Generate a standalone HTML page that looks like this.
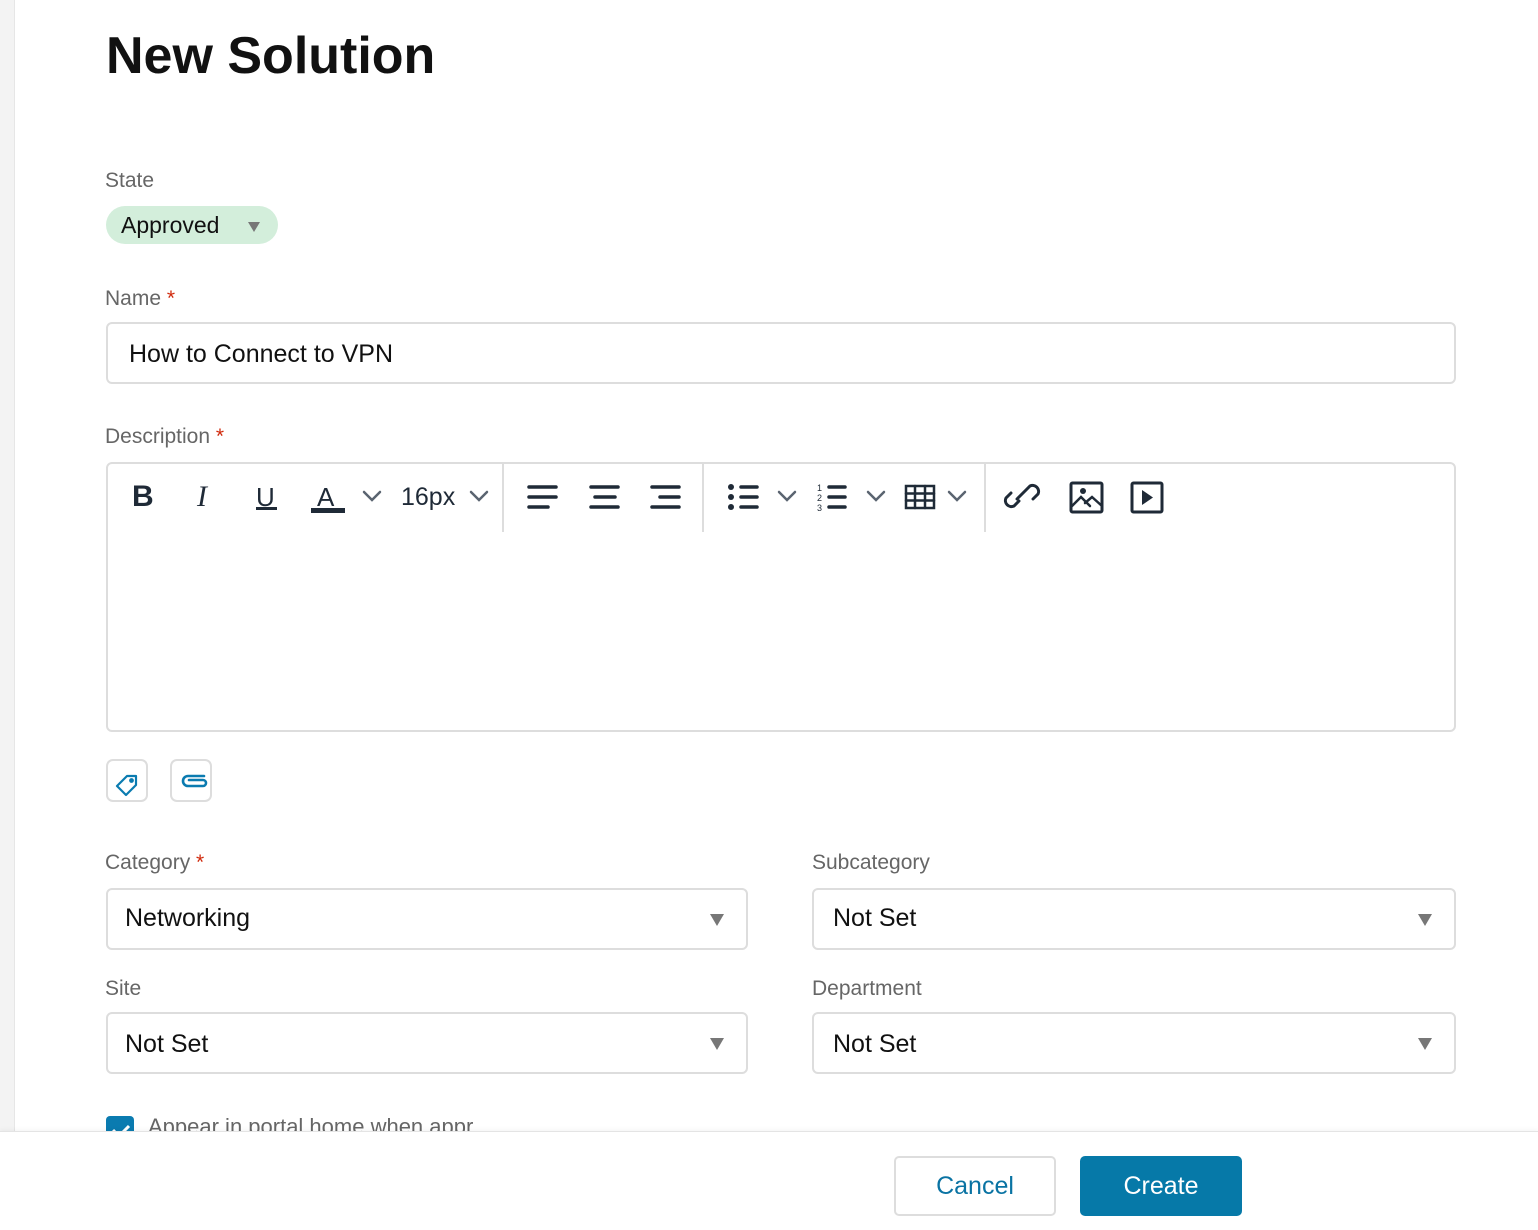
<!DOCTYPE html>
<html><head><meta charset="utf-8"><style>
*{box-sizing:border-box;margin:0;padding:0}
body{width:1538px;height:1230px;position:relative;overflow:hidden;background:#fff;font-family:"Liberation Sans",Arial,sans-serif;color:#111}
.strip{position:absolute;left:0;top:0;width:15px;height:1132px;background:#f3f3f3;border-right:1px solid #e6e6e6}
.a{position:absolute}
h1{position:absolute;left:106px;top:26px;font-size:52px;font-weight:bold;color:#111;letter-spacing:0}
.lbl{position:absolute;font-size:21px;color:#666}
.req{color:#d0290c}
.box{position:absolute;border:2px solid #ddd;border-radius:6px;background:#fff}
.val{position:absolute;font-size:25px;color:#111}
.tri{position:absolute;width:0;height:0;border-left:7px solid transparent;border-right:7px solid transparent;border-top:12px solid #777}
.sep{position:absolute;top:464px;width:2px;height:68px;background:#ddd}
svg{position:absolute}
</style></head><body>
<div class="strip"></div>
<h1>New Solution</h1>

<div class="lbl" style="left:105px;top:169px">State</div>
<div class="a" style="left:106px;top:206px;width:172px;height:38px;border-radius:19px;background:#d3eedb"></div>
<div class="val" style="left:121px;top:212px;font-size:23px">Approved</div>
<div class="tri" style="left:248px;top:222px;border-left-width:6px;border-right-width:6px;border-top-width:10px"></div>

<div class="lbl" style="left:105px;top:287px">Name<span class="req"> *</span></div>
<div class="box" style="left:106px;top:322px;width:1350px;height:62px"></div>
<div class="val" style="left:129px;top:340px">How to Connect to VPN</div>

<div class="lbl" style="left:105px;top:425px">Description<span class="req"> *</span></div>
<div class="box" style="left:106px;top:462px;width:1350px;height:270px"></div>
<div class="sep" style="left:502px"></div>
<div class="sep" style="left:702px"></div>
<div class="sep" style="left:984px"></div>

<div class="a" style="left:132px;top:480px;font-size:30px;font-weight:bold;color:#1f2a37">B</div>
<div class="a" style="left:197px;top:480px;font-size:30px;font-style:italic;font-family:'Liberation Serif',serif;color:#1f2a37">I</div>
<div class="a" style="left:256px;top:482px;font-size:26px;color:#1f2a37">U</div>
<div class="a" style="left:256px;top:507px;width:21px;height:3px;background:#1f2a37"></div>
<div class="a" style="left:317px;top:482px;font-size:26px;color:#1f2a37">A</div>
<div class="a" style="left:311px;top:508px;width:34px;height:5px;background:#1f2a37"></div>
<div class="a" style="left:401px;top:483px;font-size:25px;color:#1f2a37">16px</div>

<svg width="1538" height="80" style="left:0;top:460px" fill="none" stroke-linecap="round">
 <g stroke="#5a6470" stroke-width="2.5">
  <path d="M364 32l8 8 8-8"/><path d="M471 32l8 8 8-8"/><path d="M779 32l8 8 8-8"/><path d="M868 32l8 8 8-8"/><path d="M949 32l8 8 8-8"/>
 </g>
 <g stroke="#1f2a37" stroke-width="3.5">
  <path d="M529 27h27M529 37h27M529 47h19"/>
  <path d="M591 27h27M595 37h20M591 47h27"/>
  <path d="M652 27h27M660 37h19M652 47h27"/>
  <path d="M741 27h16M741 37h16M741 47h16"/>
  <path d="M829 27h16M829 37h16M829 47h16"/>
 </g>
 <g fill="#1f2a37"><circle cx="731" cy="27" r="3"/><circle cx="731" cy="37" r="3"/><circle cx="731" cy="47" r="3"/></g>
 <text x="817" y="31" font-size="9" fill="#1f2a37" font-family="Liberation Sans">1</text>
 <text x="817" y="41" font-size="9" fill="#1f2a37" font-family="Liberation Sans">2</text>
 <text x="817" y="51" font-size="9" fill="#1f2a37" font-family="Liberation Sans">3</text>
 <g stroke="#1f2a37" stroke-width="2.5">
  <rect x="906" y="26" width="28" height="22"/><path d="M906 33.5h28M906 40.5h28M915 26v22M925 26v22"/>
  <g stroke-width="3"><path d="M1019 41l-5 5a6 6 0 0 1-8-8l5-5M1025 31l5-5a6 6 0 0 1 8 8l-5 5M1017 39l10-10"/></g>
  <rect x="1071" y="23" width="31" height="29" rx="1.5" stroke-width="3"/>
  <path d="M1071 47l10-10 9 9M1085 43l7-6 10 9"/>
  <rect x="1132" y="23" width="30" height="29" rx="1.5" stroke-width="3"/>
 </g>
 <circle cx="1083" cy="31" r="3" fill="#1f2a37"/>
 <path d="M1142 30v15l11-7.5z" fill="#1f2a37"/>
</svg>

<div class="box" style="left:106px;top:759px;width:42px;height:43px;border-radius:7px"></div>
<div class="box" style="left:170px;top:759px;width:42px;height:43px;border-radius:7px"></div>
<svg width="120" height="50" style="left:100px;top:760px" fill="none" stroke="#0a7bb0" stroke-width="2.2" stroke-linejoin="round" stroke-linecap="round">
 <path d="M17 26l10-10h9v9L26 35z"/><circle cx="31.5" cy="20.5" r="1.3" fill="#0a7bb0"/>
 <path d="M104 16h-16a5 5 0 0 0 0 10h15a3 3 0 0 0 0-6h-14" stroke-width="2.6"/>
</svg>

<div class="lbl" style="left:105px;top:851px">Category<span class="req"> *</span></div>
<div class="box" style="left:106px;top:888px;width:642px;height:62px"></div>
<div class="val" style="left:125px;top:904px">Networking</div>
<div class="tri" style="left:710px;top:914px"></div>

<div class="lbl" style="left:812px;top:851px">Subcategory</div>
<div class="box" style="left:812px;top:888px;width:644px;height:62px"></div>
<div class="val" style="left:833px;top:904px">Not Set</div>
<div class="tri" style="left:1418px;top:914px"></div>

<div class="lbl" style="left:105px;top:977px">Site</div>
<div class="box" style="left:106px;top:1012px;width:642px;height:62px"></div>
<div class="val" style="left:125px;top:1030px">Not Set</div>
<div class="tri" style="left:710px;top:1038px"></div>

<div class="lbl" style="left:812px;top:977px">Department</div>
<div class="box" style="left:812px;top:1012px;width:644px;height:62px"></div>
<div class="val" style="left:833px;top:1030px">Not Set</div>
<div class="tri" style="left:1418px;top:1038px"></div>

<div class="a" style="left:106px;top:1116px;width:28px;height:28px;border-radius:4px;background:#0a7bb0"></div>
<svg width="30" height="30" style="left:106px;top:1116px" fill="none" stroke="#fff" stroke-width="3"><path d="M7 14l6 6 10-10"/></svg>
<div class="a" style="left:148px;top:1114px;font-size:22px;color:#666">Appear in portal home when appr</div>

<div class="a" style="left:0;top:1131px;width:1538px;height:99px;background:#fff;border-top:1px solid #e4e4e4;box-shadow:0 -2px 4px rgba(0,0,0,0.04)"></div>
<div class="a" style="left:894px;top:1156px;width:162px;height:60px;border:2px solid #ddd;border-radius:5px;text-align:center;line-height:56px;font-size:25px;color:#0a73a3">Cancel</div>
<div class="a" style="left:1080px;top:1156px;width:162px;height:60px;background:#0679a8;border-radius:5px;text-align:center;line-height:60px;font-size:25px;color:#fff">Create</div>
</body></html>
